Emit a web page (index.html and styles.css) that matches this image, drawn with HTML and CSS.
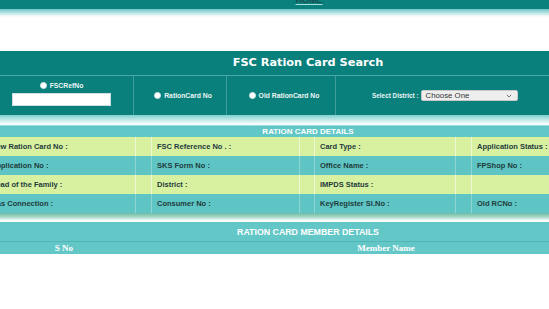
FILE: index.html
```html
<!DOCTYPE html>
<html lang="en">
<head>
    <meta charset="UTF-8">
    <meta name="viewport" content="width=device-width, initial-scale=1.0">
    <title>FSC Ration Card Search</title>
    <link rel="stylesheet" href="styles.css">
</head>
<body>

    <div class="page">
        <div class="topbar">
            <a class="home" href="#">HOME</a>
        </div>
        <div class="fade"></div>

        <div class="search">
            <div class="search-title">FSC Ration Card Search</div>
            <div class="search-row">
                <div class="opt opt-ref">
                    <label class="radio-label"><span class="radio"></span>FSCRefNo</label>
                    <span class="textbox"></span>
                </div>
                <div class="opt">
                    <label class="radio-label"><span class="radio"></span>RationCard No</label>
                </div>
                <div class="opt">
                    <label class="radio-label"><span class="radio"></span>Old RationCard No</label>
                </div>
                <div class="opt opt-district">
                    <span class="district-label">Select District :</span>
                    <span class="select">Choose One
                        <svg class="chevron" width="6" height="4" viewBox="0 0 6 4"><path d="M0.8 0.8 L3 3 L5.2 0.8" fill="none" stroke="#777" stroke-width="1"/></svg>
                    </span>
                </div>
            </div>
        </div>

        <div class="fade fade-light"></div>

        <div class="details">
            <div class="section-title">RATION CARD DETAILS</div>
            <div class="details-grid">
                <div class="cell green">New Ration Card No :</div>
                <div class="cell green"></div>
                <div class="cell green">FSC Reference No . :</div>
                <div class="cell green"></div>
                <div class="cell green">Card Type :</div>
                <div class="cell green"></div>
                <div class="cell green">Application Status :</div>

                <div class="cell cyan">Application No :</div>
                <div class="cell cyan"></div>
                <div class="cell cyan">SKS Form No :</div>
                <div class="cell cyan"></div>
                <div class="cell cyan">Office Name :</div>
                <div class="cell cyan"></div>
                <div class="cell cyan">FPShop No :</div>

                <div class="cell green">Head of the Family :</div>
                <div class="cell green"></div>
                <div class="cell green">District :</div>
                <div class="cell green"></div>
                <div class="cell green">IMPDS Status :</div>
                <div class="cell green"></div>
                <div class="cell green"></div>

                <div class="cell cyan">Gas Connection :</div>
                <div class="cell cyan"></div>
                <div class="cell cyan">Consumer No :</div>
                <div class="cell cyan"></div>
                <div class="cell cyan">KeyRegister Sl.No :</div>
                <div class="cell cyan"></div>
                <div class="cell cyan">Old RCNo :</div>
            </div>
        </div>

        <div class="shadow"></div>

        <div class="members">
            <div class="members-title">RATION CARD MEMBER DETAILS</div>
            <div class="members-head">
                <div class="col">S No</div>
                <div class="col">Member Name</div>
            </div>
        </div>
    </div>

</body>
</html>
```

FILE: styles.css
```css
* {
    margin: 0;
    padding: 0;
    box-sizing: border-box;
}

body {
    font-family: "Liberation Sans", Arial, sans-serif;
    background: #ffffff;
    overflow: hidden;
}

/* the page is wider than the window and sits a little to the left */
.page {
    width: 644px;
    margin-left: -14px;
}

.topbar {
    display: flex;
    justify-content: center;
    align-items: flex-start;
    height: 9px;
    background: #0a817d;
    overflow: hidden;
}

.home {
    display: block;
    margin-top: -4px;
    margin-left: 2px;
    font-size: 9px;
    line-height: 9px;
    font-weight: bold;
    color: #1b4f4d;
    text-decoration: underline;
    text-decoration-color: #a9dcda;
}

.fade {
    height: 8px;
    background: linear-gradient(#6cc4c3, #c9ecec 60%, #ffffff);
}

/* search box */
.search {
    margin-top: 34px;
    background: #0a807c;
    color: #ffffff;
}

.search-title {
    height: 25px;
    line-height: 24px;
    text-align: center;
    font-family: "DejaVu Sans", Verdana, sans-serif;
    font-size: 11.3px;
    font-weight: bold;
    border-bottom: 1px solid #4aa9a5;
}

.search-row {
    display: grid;
    grid-template-columns: 148px 93px 109px 1fr;
    height: 39px;
}

.opt {
    display: flex;
    flex-direction: column;
    align-items: center;
    justify-content: center;
    border-right: 1px solid #3e9f9b;
    padding-left: 6px;
}

.opt-ref {
    justify-content: flex-start;
    padding-top: 6px;
    padding-left: 4px;
    gap: 4px;
}

.opt-district {
    flex-direction: row;
    justify-content: flex-start;
    padding-left: 36px;
    gap: 2px;
    border-right: none;
}

.radio-label {
    display: flex;
    align-items: center;
    gap: 3px;
    font-size: 6.8px;
    font-weight: bold;
    color: #e9f5f4;
}

.radio {
    width: 7px;
    height: 7px;
    border-radius: 50%;
    background: #ffffff;
    border: 1px solid #d8e8e8;
}

.textbox {
    display: block;
    width: 99px;
    height: 13px;
    background: #ffffff;
    border: 1px solid #cfdede;
}

.district-label {
    font-size: 6.4px;
    font-weight: bold;
    color: #e9f5f4;
}

.select {
    display: flex;
    align-items: center;
    justify-content: space-between;
    width: 97px;
    height: 11px;
    padding: 0 5px 0 4px;
    background: #eeeeee;
    border: 1px solid #c9c9c9;
    border-radius: 2px;
    font-size: 7.8px;
    color: #333333;
}

.fade-light {
    height: 10px;
    background: linear-gradient(#7ed0cf, #dff4f4 70%, #ffffff);
}

/* ration card details */
.section-title {
    height: 12px;
    line-height: 12px;
    text-align: center;
    background: #62c7c7;
    border-top: 1px solid #9ddcdc;
    color: #ffffff;
    font-size: 8px;
    font-weight: bold;
}

.details-grid {
    display: grid;
    grid-template-columns: 150px 16px 148px 15px 141px 16px 1fr;
    grid-auto-rows: 19px;
}

.cell {
    display: flex;
    align-items: center;
    padding-left: 5px;
    font-size: 7.5px;
    font-weight: bold;
    color: #1f3b3b;
    border-right: 1px solid;
}

.cell:nth-child(7n) {
    border-right: none;
}

.green {
    background: #d8f1a1;
    border-color: #eef8d6;
}

.cyan {
    background: #5ec5c4;
    border-color: #8dd6d5;
}

.shadow {
    height: 9px;
    background: linear-gradient(#6db9a3, #a9d9c8 45%, #f2fbf8 80%, #ffffff);
}

/* member details */
.members {
    background: #64c7c7;
    color: #ffffff;
}

.members-title {
    height: 20px;
    line-height: 20px;
    text-align: center;
    font-size: 8.8px;
    font-weight: bold;
    border-bottom: 1px solid #52b5b5;
}

.members-head {
    display: grid;
    grid-template-columns: 156px 1fr;
    height: 12px;
}

.col {
    text-align: center;
    line-height: 12px;
    font-family: "Liberation Serif", "Times New Roman", serif;
    font-size: 9px;
    font-weight: bold;
}
```
